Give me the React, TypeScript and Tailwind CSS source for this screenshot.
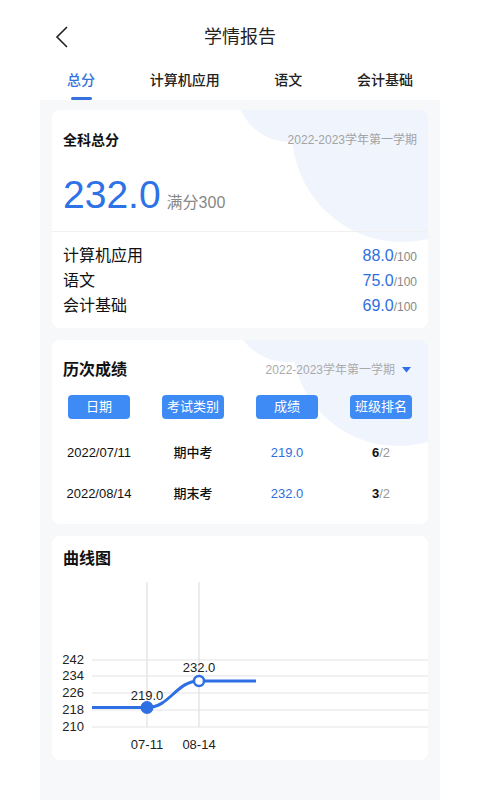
const font = '"Liberation Sans", "Noto Sans CJK SC", sans-serif'

const tabs = ['总分', '计算机应用', '语文', '会计基础']

const subjects = [
  { name: '计算机应用', score: '88.0' },
  { name: '语文', score: '75.0' },
  { name: '会计基础', score: '69.0' },
]

const history = [
  { date: '2022/07/11', type: '期中考', score: '219.0', rank: '6' },
  { date: '2022/08/14', type: '期末考', score: '232.0', rank: '3' },
]

function ScoreChart() {
  const grid = [90, 106, 123, 140, 157]
  const labels = ['242', '234', '226', '218', '210']
  return (
    <svg width="376" height="190" viewBox="0 0 376 190" className="block">
      <line x1="95" y1="12" x2="95" y2="157" stroke="#d9d9d9" strokeWidth="1" />
      <line x1="147" y1="12" x2="147" y2="157" stroke="#d9d9d9" strokeWidth="1" />
      {grid.map((y) => (
        <line key={y} x1="40" y1={y} x2="376" y2={y} stroke="#e3e3e3" strokeWidth="1" />
      ))}
      {labels.map((l, i) => (
        <text
          key={l}
          x="32"
          y={grid[i] + 4}
          textAnchor="end"
          fontSize="13"
          fill="#222"
          fontFamily={font}
        >
          {l}
        </text>
      ))}
      <path
        d="M40 137.5 L95 137.5 C118 137.5 124 111 147 111 L204 111"
        fill="none"
        stroke="#2f6fe4"
        strokeWidth="3"
      />
      <circle cx="95" cy="137.5" r="6.5" fill="#2f6fe4" />
      <circle cx="147" cy="111" r="5" fill="#fff" stroke="#2f6fe4" strokeWidth="2.5" />
      <text x="95" y="129.5" textAnchor="middle" fontSize="13" fill="#222" fontFamily={font}>
        219.0
      </text>
      <text x="147" y="101.5" textAnchor="middle" fontSize="13" fill="#222" fontFamily={font}>
        232.0
      </text>
      <text x="95" y="178.5" textAnchor="middle" fontSize="13" fill="#222" fontFamily={font}>
        07-11
      </text>
      <text x="147" y="178.5" textAnchor="middle" fontSize="13" fill="#222" fontFamily={font}>
        08-14
      </text>
    </svg>
  )
}

export default function App() {
  return (
    <div
      className="relative h-[800px] w-[480px] overflow-hidden bg-white"
      style={{ fontFamily: font }}
    >
      {/* Header */}
      <div className="relative flex h-[70px] items-start justify-center pt-[25px]">
        <svg
          width="14"
          height="24"
          viewBox="0 0 14 24"
          className="absolute left-[55px] top-[25px]"
        >
          <path d="M12 2 L2 12 L12 22" fill="none" stroke="#222" strokeWidth="1.6" />
        </svg>
        <h1 className="text-[18px] leading-[24px] text-[#222]">学情报告</h1>
      </div>

      {/* Tabs */}
      <div className="flex h-[30px] justify-between px-[67px]">
        {tabs.map((t, i) => (
          <div key={t} className="relative flex flex-col items-center">
            <span
              className={`text-[14px] font-medium leading-[20px] ${
                i === 0 ? 'text-[#3572de]' : 'text-[#222]'
              }`}
            >
              {t}
            </span>
            {i === 0 && (
              <span className="mt-[7px] h-[3px] w-[21px] rounded-full bg-[#3572de]" />
            )}
          </div>
        ))}
      </div>

      {/* Content panel */}
      <div className="mx-[40px] flex h-[700px] flex-col gap-[12px] bg-[#f7f8fa] px-[12px] pt-[10px]">
        {/* Total score card */}
        <div className="relative overflow-hidden rounded-[8px] bg-white">
          <div className="absolute left-[184px] top-[-76px] h-[108px] w-[108px] rounded-full bg-[#f0f5fd]" />
          <div className="absolute left-[240px] top-[-88px] h-[220px] w-[220px] rounded-full bg-[#f0f5fd]" />
          <div className="relative border-b border-[#f0f0f2] px-[11px] pb-[16px] pt-[20px]">
            <div className="flex items-center justify-between">
              <span className="text-[14px] font-semibold leading-[20px] text-[#111]">全科总分</span>
              <span className="text-[12px] leading-[20px] text-[#a3a3a3]">
                2022-2023学年第一学期
              </span>
            </div>
            <div className="mt-[25px] flex h-[40px] items-baseline gap-[6px]">
              <span className="text-[39px] leading-[40px] text-[#2d72e6]">232.0</span>
              <span className="text-[16px] leading-[20px] text-[#888]">满分300</span>
            </div>
          </div>
          <div className="relative px-[11px] pb-[10px] pt-[11px]">
            {subjects.map((s) => (
              <div key={s.name} className="flex h-[25px] items-center justify-between">
                <span className="text-[16px] text-[#111]">{s.name}</span>
                <span className="flex items-baseline">
                  <span className="text-[16px] text-[#2d6fdf]">{s.score}</span>
                  <span className="text-[12px] text-[#888]">/100</span>
                </span>
              </div>
            ))}
          </div>
        </div>

        {/* History card */}
        <div className="relative overflow-hidden rounded-[8px] bg-white pb-[10px] pt-[19px]">
          <div className="absolute left-[179px] top-[-92px] h-[114px] w-[114px] rounded-full bg-[#f0f5fd]" />
          <div className="absolute left-[240px] top-[-106px] h-[212px] w-[212px] rounded-full bg-[#f0f5fd]" />
          <div className="relative flex h-[22px] items-center justify-between px-[11px]">
            <span className="text-[16px] font-semibold text-[#111]">历次成绩</span>
            <span className="flex items-center gap-[7px] pr-[6px]">
              <span className="text-[12px] text-[#aaa]">2022-2023学年第一学期</span>
              <svg width="9" height="6" viewBox="0 0 9 6">
                <path d="M0 0 L9 0 L4.5 5.5 Z" fill="#2d6fe6" />
              </svg>
            </span>
          </div>
          <div className="relative mt-[14px] grid grid-cols-4">
            {['日期', '考试类别', '成绩', '班级排名'].map((h) => (
              <div key={h} className="flex justify-center">
                <span className="flex h-[24px] w-[62px] items-center justify-center rounded-[4px] bg-[#3f8bf5] text-[13px] text-white">
                  {h}
                </span>
              </div>
            ))}
          </div>
          <div className="relative mt-[13px]">
            {history.map((r) => (
              <div key={r.date} className="grid h-[41px] grid-cols-4 items-center text-[13px]">
                <span className="text-center font-medium text-[#111]">{r.date}</span>
                <span className="text-center font-medium text-[#111]">{r.type}</span>
                <span className="text-center text-[#2d6fdf]">{r.score}</span>
                <span className="text-center">
                  <span className="font-semibold text-[#111]">{r.rank}</span>
                  <span className="text-[#999]">/2</span>
                </span>
              </div>
            ))}
          </div>
        </div>

        {/* Chart card */}
        <div className="rounded-[8px] bg-white pt-[12px]">
          <div className="h-[22px] px-[11px] text-[16px] font-semibold leading-[22px] text-[#111]">
            曲线图
          </div>
          <ScoreChart />
        </div>
      </div>
    </div>
  )
}
